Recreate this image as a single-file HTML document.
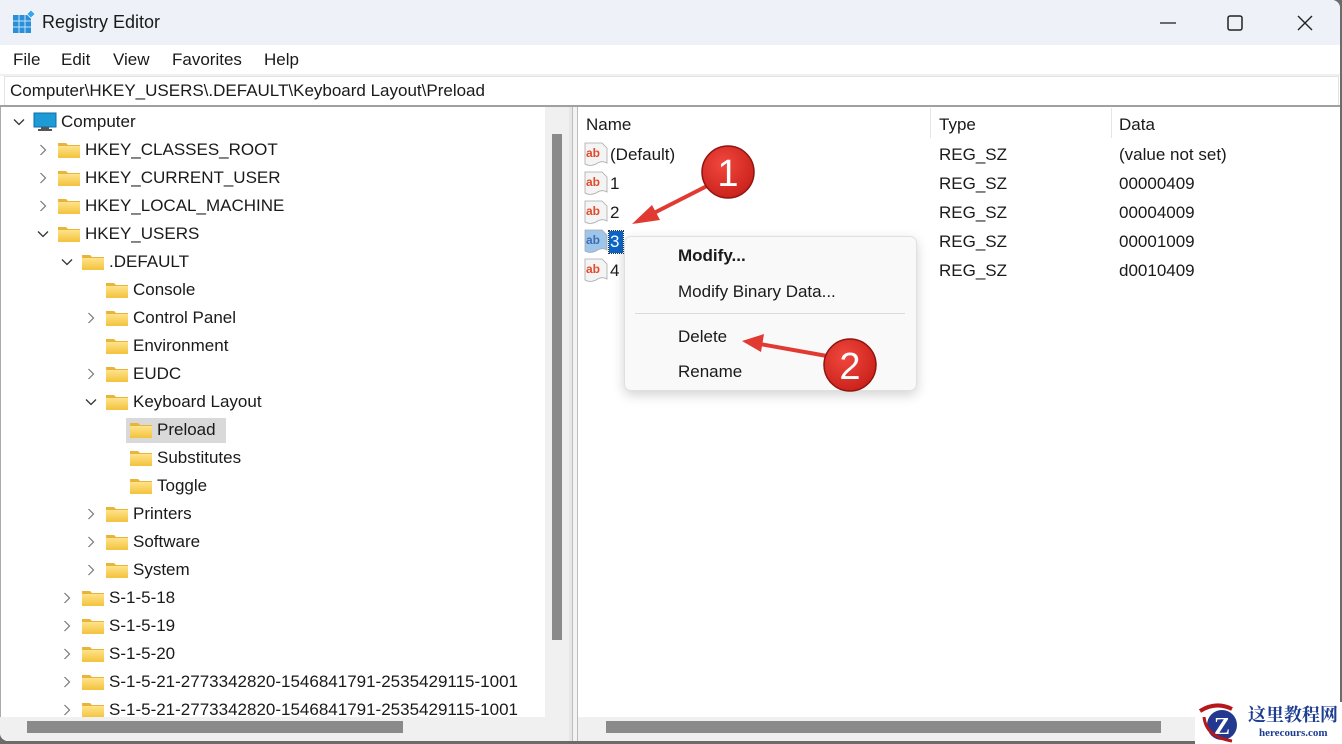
<!DOCTYPE html>
<html><head><meta charset="utf-8">
<style>
*{margin:0;padding:0;box-sizing:border-box}
body{width:1342px;height:744px;overflow:hidden;background:#6b6b6b;font-family:"Liberation Sans","Noto Sans CJK SC",sans-serif;font-size:17px;color:#1a1a1a;position:relative}
.a{position:absolute;white-space:nowrap}
.win{position:absolute;left:0;top:0;width:1340px;height:741px;background:#fff;border-radius:0 8px 8px 8px;overflow:hidden}
.title{position:absolute;left:0;top:0;width:100%;height:45px;background:#eef2f8}
.menu span{position:absolute;top:50px}
.row{position:absolute;height:28px;line-height:28px}
.fold{position:absolute;width:22px;height:16px;top:6px}
.chev{position:absolute;top:8px;width:12px;height:12px}
.li{position:absolute;line-height:29px;height:29px}
.ab{position:absolute;width:24px;height:24px}
</style></head><body>
<div class="win">
<div class="title"></div>
<!-- app icon -->
<svg class="a" style="left:12px;top:10px" width="24" height="24" viewBox="0 0 24 24">
<rect x="1" y="5" width="18" height="18" fill="#2a8fd6"/>
<g stroke="#bfe3fb" stroke-width="1"><line x1="7" y1="5" x2="7" y2="23"/><line x1="13" y1="5" x2="13" y2="23"/><line x1="1" y1="11" x2="19" y2="11"/><line x1="1" y1="17" x2="19" y2="17"/></g>
<rect x="16" y="1" width="6" height="6" transform="rotate(45 19 4)" fill="#3aa7ea" stroke="#fff" stroke-width="0.8"/>
</svg>
<div class="a" style="left:42px;top:12px;font-size:18px">Registry Editor</div>
<svg class="a" style="left:1150px;top:12px" width="180" height="22">
<line x1="10" y1="11" x2="26" y2="11" stroke="#222" stroke-width="1.3"/>
<rect x="78" y="4" width="14" height="14" rx="2" fill="none" stroke="#222" stroke-width="1.5"/>
<path d="M148 4 L162 18 M162 4 L148 18" stroke="#222" stroke-width="1.4"/>
</svg>
<div class="menu"><span style="left:13px">File</span><span style="left:61px">Edit</span><span style="left:113px">View</span><span style="left:172px">Favorites</span><span style="left:264px">Help</span></div>
<div class="a" style="left:0;top:74px;width:1340px;height:2px;background:#f0f0f0"></div>
<div class="a" style="left:4px;top:76px;width:1335px;height:30px;border:1px solid #e3e3e3;border-bottom:none"></div>
<div class="a" style="left:10px;top:81px">Computer\HKEY_USERS\.DEFAULT\Keyboard Layout\Preload</div>
<div class="a" style="left:0;top:105px;width:1340px;height:2px;background:#a0a0a0"></div>

<!-- tree pane -->
<div class="a" style="left:0;top:107px;width:572px;height:634px;overflow:hidden;border-left:1px solid #aaa" id="tree">
</div>
<!-- vertical scrollbar -->
<div class="a" style="left:545px;top:107px;width:24px;height:610px;background:#f0f0f0"></div>
<div class="a" style="left:552px;top:134px;width:10px;height:506px;background:#8a8a8a"></div>
<!-- splitter -->
<div class="a" style="left:569px;top:107px;width:3px;height:634px;background:#e6e6e6"></div>
<div class="a" style="left:572px;top:107px;width:6px;height:634px;background:#f3f3f3;border-left:1px solid #bdbdbd;border-right:1px solid #bdbdbd"></div>
<!-- horizontal scrollbars -->
<div class="a" style="left:0;top:717px;width:569px;height:24px;background:#f0f0f0"></div>
<div class="a" style="left:27px;top:721px;width:376px;height:12px;background:#8a8a8a"></div>
<div class="a" style="left:578px;top:717px;width:762px;height:24px;background:#f0f0f0"></div>
<div class="a" style="left:606px;top:721px;width:555px;height:12px;background:#8a8a8a"></div>

<!-- list header -->
<div class="a" style="left:586px;top:115px">Name</div>
<div class="a" style="left:939px;top:115px">Type</div>
<div class="a" style="left:1119px;top:115px">Data</div>
<div class="a" style="left:930px;top:108px;width:1px;height:30px;background:#e5e5e5"></div>
<div class="a" style="left:1111px;top:108px;width:1px;height:30px;background:#e5e5e5"></div>
<div id="list"></div>

<!-- context menu -->
<div class="a" style="left:624px;top:236px;width:293px;height:155px;background:#f9f9f9;border:1px solid #e0e0e0;border-radius:7px;box-shadow:0 4px 12px rgba(0,0,0,.18)"></div>
<div class="a" style="left:678px;top:246px;font-weight:bold">Modify...</div>
<div class="a" style="left:678px;top:282px">Modify Binary Data...</div>
<div class="a" style="left:635px;top:313px;width:270px;height:1px;background:#dcdcdc"></div>
<div class="a" style="left:678px;top:327px">Delete</div>
<div class="a" style="left:678px;top:362px">Rename</div>

<!-- annotations -->
<svg class="a" style="left:0;top:0" width="1342" height="744">
<defs><radialGradient id="rg" cx="40%" cy="35%" r="70%"><stop offset="0" stop-color="#f0483e"/><stop offset="1" stop-color="#c9201a"/></radialGradient></defs>
<line x1="707" y1="186" x2="648" y2="216" stroke="#e03a33" stroke-width="4"/>
<path d="M632 224 L652 205 L660 220 Z" fill="#e03a33"/>
<circle cx="728" cy="172" r="26" fill="url(#rg)" stroke="#8e1511" stroke-width="1.5"/>
<text x="728" y="186" text-anchor="middle" font-family="Liberation Sans" font-size="38" fill="#fff">1</text>
<line x1="827" y1="356" x2="760" y2="344" stroke="#e03a33" stroke-width="4"/>
<path d="M742 341 L764 334 L761 352 Z" fill="#e03a33"/>
<circle cx="850" cy="365" r="26" fill="url(#rg)" stroke="#8e1511" stroke-width="1.5"/>
<text x="850" y="379" text-anchor="middle" font-family="Liberation Sans" font-size="38" fill="#fff">2</text>
</svg>
</div>
<!-- watermark -->
<div class="a" style="left:1195px;top:702px;width:147px;height:42px;background:#fff"></div>
<svg class="a" style="left:1196px;top:703px" width="50" height="40">
<path d="M4 8 Q20 -2 36 6" stroke="#b5171b" stroke-width="4" fill="none"/>
<circle cx="26" cy="22" r="15" fill="#23398f"/>
<text x="26" y="31" text-anchor="middle" font-family="Liberation Serif" font-weight="bold" font-size="24" fill="#fff">Z</text>
<path d="M8 14 Q10 34 36 38" stroke="#b5171b" stroke-width="3" fill="none"/>
</svg>
<div class="a" style="left:1248px;top:704px;font-family:'Noto Serif CJK SC','Noto Sans CJK SC',serif;font-weight:bold;font-size:18px;color:#1d3d91;line-height:20px">这里教程网</div>
<div class="a" style="left:1259px;top:727px;font-family:'Liberation Serif',serif;font-weight:bold;font-size:11px;color:#1d3d91">herecours.com</div>

<script>
var rows=[["Computer",0,"d"],["HKEY_CLASSES_ROOT",1,"r"],["HKEY_CURRENT_USER",1,"r"],["HKEY_LOCAL_MACHINE",1,"r"],["HKEY_USERS",1,"d"],[".DEFAULT",2,"d"],["Console",3,""],["Control Panel",3,"r"],["Environment",3,""],["EUDC",3,"r"],["Keyboard Layout",3,"d"],["Preload",4,"s"],["Substitutes",4,""],["Toggle",4,""],["Printers",3,"r"],["Software",3,"r"],["System",3,"r"],["S-1-5-18",2,"r"],["S-1-5-19",2,"r"],["S-1-5-20",2,"r"],["S-1-5-21-2773342820-1546841791-2535429115-1001",2,"r"],["S-1-5-21-2773342820-1546841791-2535429115-1001",2,"r"]];
var h="";
rows.forEach(function(r,i){
 var top=108+i*28,L=r[1];
 var cx=12+24*L;
 if(r[2]=="d") h+='<svg class="chev" style="left:'+cx+'px;top:'+(top+8)+'px" viewBox="0 0 12 12"><path d="M1 3.5 L6 8.5 L11 3.5" stroke="#333" stroke-width="1.3" fill="none"/></svg>';
 if(r[2]=="r") h+='<svg class="chev" style="left:'+cx+'px;top:'+(top+8)+'px" viewBox="0 0 12 12"><path d="M3.5 1 L8.5 6 L3.5 11" stroke="#777" stroke-width="1.2" fill="none"/></svg>';
 var fx=32+24*(L-1)+(L==0?-8:0);
 if(L==0){
  h+='<svg class="a" style="left:32px;top:'+(top+4)+'px" width="24" height="20"><rect x="1" y="1" width="22" height="14" fill="#1e9ad6" stroke="#0b6fa8"/><rect x="8" y="15" width="8" height="2" fill="#555"/><rect x="5" y="17" width="14" height="2" fill="#555"/></svg>';
  h+='<div class="row" style="left:60px;top:'+top+'px">'+r[0]+'</div>';
 } else {
  fx=56+24*(L-1);
  if(r[2]=="s") h+='<div class="a" style="left:'+(fx-3)+'px;top:'+(top+2)+'px;width:'+(100)+'px;height:25px;background:#d9d9d9"></div>';
  h+='<svg class="a" style="left:'+fx+'px;top:'+(top+5)+'px" width="24" height="19"><defs><linearGradient id="fg'+i+'" x1="0" y1="0" x2="0" y2="1"><stop offset="0" stop-color="#ffe38a"/><stop offset="1" stop-color="#f3c23c"/></linearGradient></defs><path d="M1 2 h8 l2 2 h12 v13 h-22 z" fill="#e9b43a"/><rect x="1" y="5" width="22" height="12" fill="url(#fg'+i+')"/></svg>';
  h+='<div class="row" style="left:'+(fx+28)+'px;top:'+top+'px">'+r[0]+'</div>';
 }
});
document.getElementById("tree").innerHTML='<div style="position:absolute;left:0;top:-107px;width:545px;height:824px">'+h+'</div>';
var li=[["(Default)","REG_SZ","(value not set)"],["1","REG_SZ","00000409"],["2","REG_SZ","00004009"],["3","REG_SZ","00001009"],["4","REG_SZ","d0010409"]];
var g="";
li.forEach(function(r,i){
 var t=140+i*29,sel=i==3;
 g+='<svg class="ab" style="left:584px;top:'+(t+2)+'px" viewBox="0 0 24 24"><path d="M1 1 h17 l5 5 v15 q-5 -3 -11 1 q-6 3 -11 0 z" fill="'+(sel?'#9ec6ea':'#f4f4f4')+'" stroke="#a9a9a9" stroke-width="0.8"/><text x="2" y="15" font-family="Liberation Sans" font-weight="bold" font-size="12" fill="'+(sel?'#3d6fb3':'#e24a2b')+'">ab</text></svg>';
 if(sel) g+='<div class="a" style="left:609px;top:'+(t+4)+'px;width:14px;height:22px;background:#0a64c8;outline:1px dotted #333"></div>';
 g+='<div class="li" style="left:610px;top:'+t+'px;color:'+(sel?'#fff':'#1a1a1a')+'">'+r[0]+'</div>';
 if(i<3||i==4||true) g+='<div class="li" style="left:939px;top:'+t+'px">'+r[1]+'</div><div class="li" style="left:1119px;top:'+t+'px">'+r[2]+'</div>';
});
document.getElementById("list").innerHTML=g;
</script>
</body></html>
